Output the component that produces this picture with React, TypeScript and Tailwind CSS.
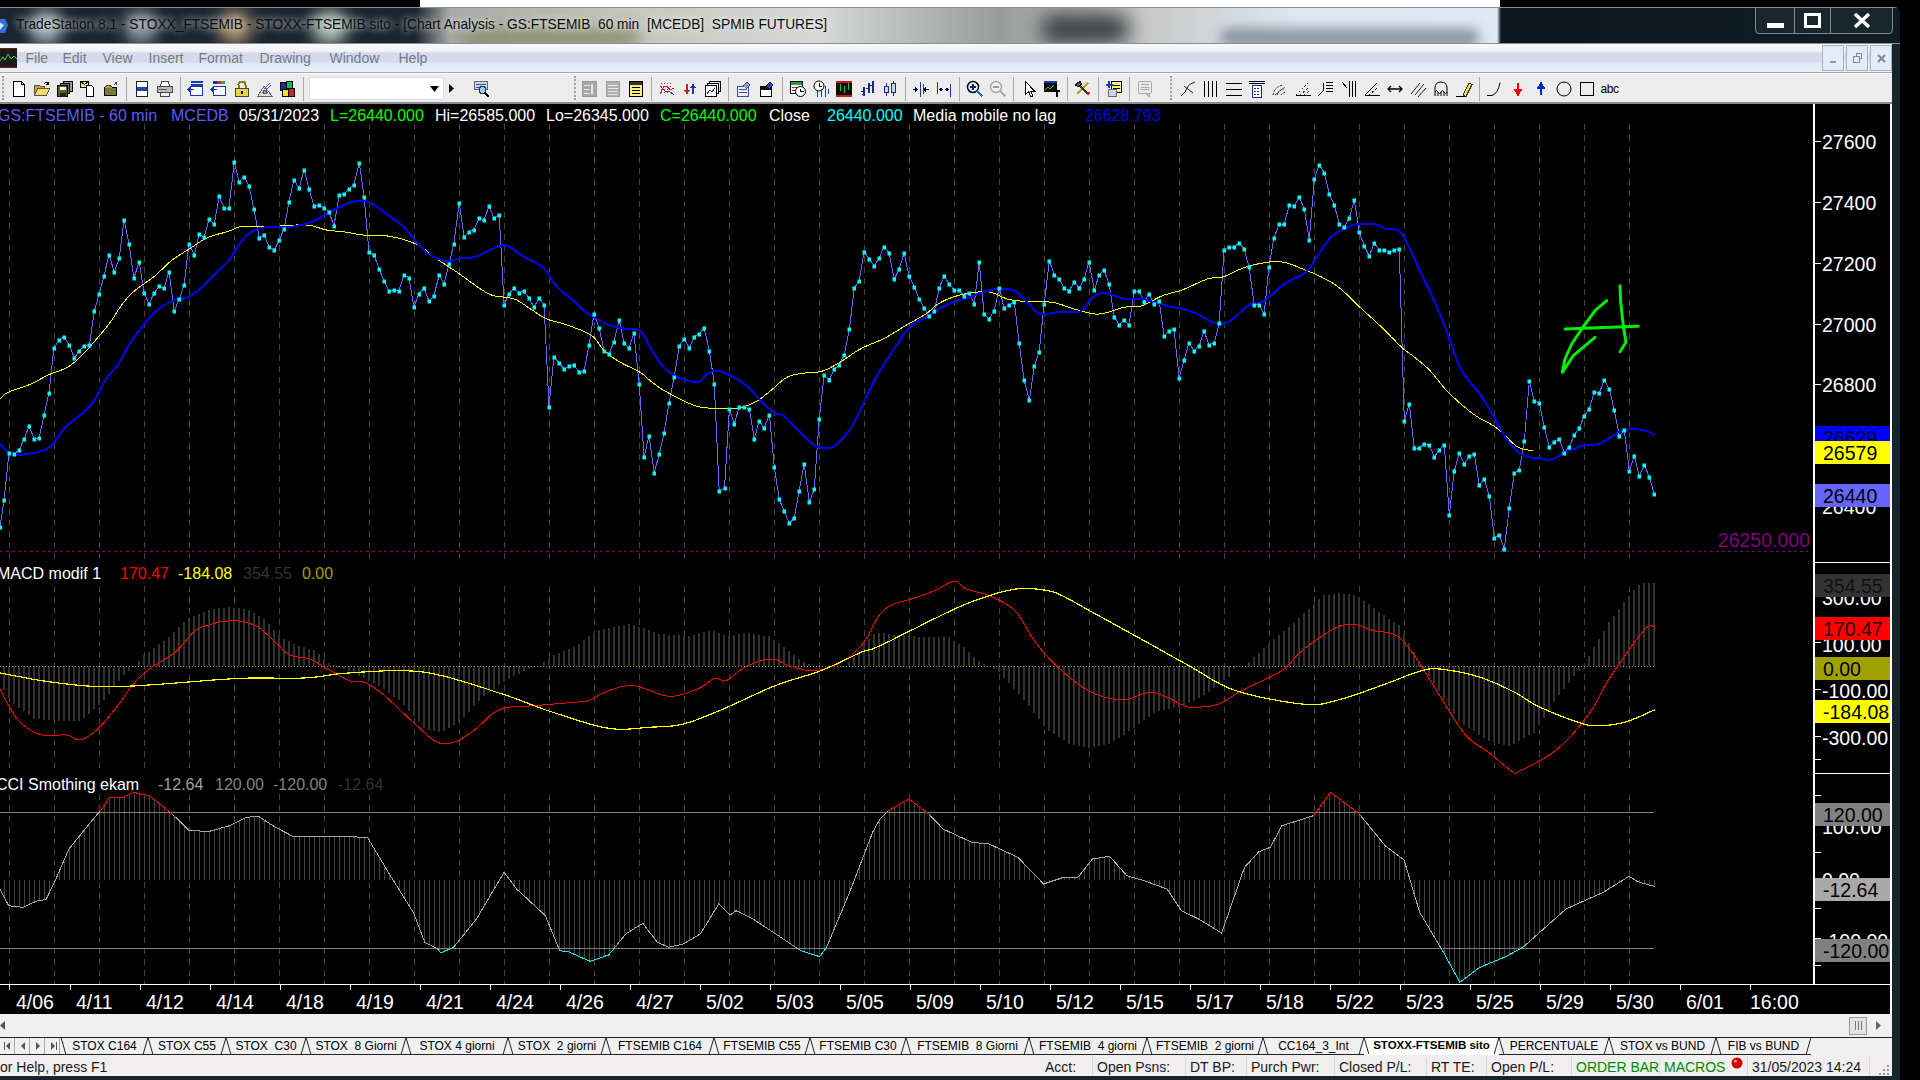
import React from 'react';

type Pt = [number, number];

// chart traces, read off crops: "x,y" pairs, converted to page pixels
const P = (s: string, ox: number, sx: number, oy: number): Pt[] =>
  s.trim().split(/\s+/).map((p) => {
    const [a, b] = p.split(',').map(Number);
    return [+(ox + a / sx).toFixed(1), +(oy + b / 3).toFixed(1)] as Pt;
  });
const L = (pts: Pt[]) => pts.map((p) => p.join(',')).join(' ');
const at = (pts: Pt[], x: number) => {
  for (let i = 1; i < pts.length; i++) {
    if (x <= pts[i][0]) {
      const [x0, y0] = pts[i - 1];
      const [x1, y1] = pts[i];
      return y0 + ((y1 - y0) * (x - x0)) / Math.max(x1 - x0, 0.01);
    }
  }
  return pts[pts.length - 1][1];
};
// catmull-rom, the moving averages are curves and not polygons
const smooth = (pts: Pt[], n = 6): Pt[] => {
  const out: Pt[] = [];
  for (let i = 0; i < pts.length - 1; i++) {
    const p0 = pts[Math.max(i - 1, 0)];
    const p1 = pts[i];
    const p2 = pts[i + 1];
    const p3 = pts[Math.min(i + 2, pts.length - 1)];
    for (let k = 0; k < n; k++) {
      const t = k / n;
      const f = (a: number, b: number, c: number, d: number) =>
        0.5 * (2 * b + (c - a) * t + (2 * a - 5 * b + 4 * c - d) * t * t + (3 * b - a - 3 * c + d) * t * t * t);
      out.push([+f(p0[0], p1[0], p2[0], p3[0]).toFixed(1), +f(p0[1], p1[1], p2[1], p3[1]).toFixed(1)]);
    }
  }
  out.push(pts[pts.length - 1]);
  return out;
};

const close: Pt[] = [
  ...P(`0,1195 10,1112 22,972 35,975 47,962 59,930 71,892 84,930 96,927 108,857 120,792 132,657 145,633 157,623 170,648 182,687 194,665 206,650 219,648 231,546 243,495 255,440 267,377 280,429 292,388 304,272 316,344 328,447 341,398 353,492 365,525 378,491 390,472 402,477 414,428 427,546 439,510 451,467 463,344 476,378 488,316 500,325 512,271 525,285 537,202 549,237 561,237 574,98 586,158 598,143 610,171 622,239 635,326 647,317 659,353 672,363 684,333 696,299 708,218 720,153 733,177 745,122 757,179 769,231 782,228 794,236 806,248 818,291 831,198 843,195 855,179 867,167 880,101 892,204 904,368 916,378 929,420 941,456 953,486 965,484 977,486 990,437 1002,446 1014,535 1026,495 1039,477 1051,516 1063,501 1076,437 1088,465 1100,405 1112,344 1125,221 1137,323 1149,309 1161,302 1174,267 1186,272 1198,231 1210,267 1223,258 1235,527 1247,495 1259,477 1272,491 1284,486 1296,507 1308,534 1321,507 1333,527 1345,833 1357,684 1370,702 1382,720 1394,712 1406,708 1419,729 1431,726 1443,648 1455,555 1468,597 1480,666 1492,675 1504,638 1517,572 1529,642 1541,657 1553,612 1566,765`, 0, 2.45, 130),
  ...P(`10,984 22,920 35,1032 47,975 59,912 71,822 84,744 96,651 108,629 121,657 133,623 145,615 157,597 170,665 182,765 194,1086 207,1077 219,840 231,885 243,834 255,834 268,840 280,930 292,875 304,897 317,857 329,1014 341,1110 353,1146 366,1182 378,1167 390,1085 402,1004 415,1120 427,1080 439,870 451,738 464,753 476,720 488,708 500,678 513,600 525,477 537,456 549,369 562,390 574,411 586,386 598,353 610,371 623,450 635,420 647,372 659,441 672,474 684,510 696,537 708,561 721,546 733,477 745,441 757,464 770,483 782,483 794,501 806,492 819,525 831,399 843,555 855,570 868,545 880,477 892,537 905,527 917,519 929,642 941,753 954,813 966,711 978,669 990,525 1003,396 1015,437 1027,450 1039,476 1051,486 1064,458 1076,477 1088,450 1100,399 1113,483 1125,437 1137,423 1149,465 1162,563 1174,588 1186,573 1198,588 1211,486 1223,486 1235,519 1247,495 1260,525 1272,516 1284,621 1296,606 1308,600 1321,747 1333,693 1345,641 1358,666 1370,651 1382,606 1394,648 1407,641 1419,582 1431,363 1443,354 1455,354 1468,342 1480,360 1492,414 1505,527 1517,527 1529,555 1541,414 1553,327 1566,285`, 640, 2.45, 130),
  ...P(`13,285 28,227 43,231 58,204 73,240 88,333 103,150 118,107 133,131 148,195 163,228 178,285 193,295 208,267 223,213 238,309 253,351 268,381 283,342 298,363 313,363 328,369 343,363 358,360 373,876 388,825 403,957 418,957 433,944 448,947 463,984 478,963 493,947 508,1158 523,1026 538,972 553,1005 568,981 583,975 598,1068 613,1050 628,1101 643,1227 658,1218 673,1260 688,1137 703,1032 718,1023 733,936 748,756 763,816 778,822 793,893 808,954 823,938 838,930 853,971 868,954 883,918 898,897 913,861 928,840 943,789 958,792 973,753 988,780 1003,843 1018,921 1033,903 1048,1026 1063,981 1078,1041 1093,1008 1108,1044 1123,1095`, 1280, 3, 130),
];
const fastMa: Pt[] = smooth([
  ...P(`0,945 20,970 45,978 90,970 110,962 130,945 160,895 205,850 230,815 260,750 290,705 320,640 350,590 375,555 400,530 430,512 460,505 495,475 530,430 560,395 590,340 615,310 650,295 700,295 740,287 770,275 800,255 830,235 860,220 890,215 920,230 950,258 990,295 1020,340 1050,375 1075,390 1100,397 1130,387 1160,385 1190,370 1225,350 1250,355 1280,380 1330,415 1350,450 1375,485 1410,520 1430,545 1480,582 1520,597 1568,606`, 0, 2.45, 130),
  ...P(`25,655 55,710 85,740 120,755 145,758 165,735 190,725 230,745 265,775 300,820 330,852 352,860 385,900 430,950 470,955 495,930 525,880 560,790 590,720 620,665 660,595 700,565 740,535 770,518 800,508 840,490 880,480 920,487 950,522 980,555 1020,550 1080,547 1105,510 1135,492 1190,510 1230,510 1290,530 1350,547 1415,585 1450,572 1490,530 1530,515 1568,475`, 640, 2.45, 130),
  ...P(`30,455 80,428 110,385 140,340 165,315 220,288 280,285 320,300 358,306 385,350 420,425 460,510 490,580 515,650 540,715 570,760 600,795 640,860 670,915 715,970 750,985 780,987 805,993 830,985 860,965 885,960 905,950 955,945 1000,920 1030,903 1090,903 1123,918`, 1280, 3, 130),
]);
const slowMa: Pt[] = smooth([
  ...P(`0,810 20,790 70,768 120,737 165,715 200,680 240,625 270,580 300,525 330,485 380,440 420,395 470,355 510,325 560,307 595,292 670,292 750,288 800,303 840,308 890,318 935,319 985,330 1030,352 1060,382 1120,430 1180,482 1210,500 1260,510 1300,540 1340,570 1390,588 1450,620 1480,665 1520,700 1568,730`, 0, 2.45, 130),
  ...P(`30,760 60,785 130,828 180,838 240,838 285,817 320,785 360,745 400,733 445,727 490,700 540,660 600,627 650,590 700,555 730,525 770,503 820,490 860,490 900,510 940,517 1010,520 1070,542 1125,555 1185,535 1230,530 1280,500 1330,482 1390,450 1430,443 1490,412 1568,398`, 640, 2.45, 130),
  ...P(`80,425 130,447 180,478 240,535 300,590 365,655 400,682 450,725 505,790 580,855 640,890 670,915 715,955 760,965`, 1280, 3, 130),
]);

const macd: Pt[] = smooth([
  ...P(`0,390 30,480 70,527 115,528 140,542 170,510 205,440 230,380 260,330 305,280 340,215 370,195 390,187 420,187 450,205 480,250 505,288 540,300 570,330 610,366 635,370 670,410 720,490 760,548 790,550 825,515 870,452 930,440 1000,430 1025,425 1060,395 1105,380 1165,412 1215,390 1245,358 1265,365 1300,322 1345,300 1375,320 1420,335 1470,305 1505,250`, 0, 1.742, 560),
  ...P(`0,165 25,135 55,120 95,95 130,66 150,90 190,110 235,155 265,235 290,290 330,355 375,405 425,422 475,400 530,440 550,445 590,435 630,395 700,335 735,275 790,210 825,196 860,215 900,230 935,300 975,410 1020,528 1060,580 1100,636 1115,636 1180,570 1235,465 1270,360 1330,215 1350,203`, 880, 1.742, 560),
]);
const signal: Pt[] = smooth([
  ...P(`0,342 80,367 160,382 220,382 300,373 420,358 530,357 600,343 700,335 770,350 880,408 960,458 1060,508 1130,505 1190,495 1260,450 1350,380 1430,335 1500,280`, 0, 1.742, 560),
  ...P(`0,260 130,150 190,110 225,94 250,88 275,91 310,104 370,160 460,245 540,322 620,395 740,436 800,422 880,375 940,337 975,330 1040,352 1100,395 1150,445 1220,492 1255,500 1300,488 1350,452`, 880, 1.742, 560),
]);
const macdHist: Pt[] = [
  ...P(`0,375 20,430 60,480 100,485 140,487 180,425 215,350 235,322 250,290 290,240 330,175 370,150 400,145 430,150 460,180 490,235 520,260 550,275 570,310 585,322 620,345 660,380 700,430 740,510 770,520 800,490 840,415 880,365 920,330 940,320 960,290 1000,265 1040,215 1100,195 1150,225 1200,230 1240,215 1270,232 1300,222 1340,232 1370,270 1400,310 1420,322 1470,322 1490,290 1520,225`, 0, 1.742, 560),
  ...P(`0,222 50,232 120,235 145,262 170,305 190,322 205,335 250,420 290,510 330,555 365,568 400,555 440,510 480,458 520,445 560,415 610,350 620,322 635,320 680,250 720,195 770,110 800,103 830,108 870,160 905,200 930,280 945,322 1010,490 1060,545 1095,563 1140,520 1180,415 1210,350 1225,322 1235,290 1270,190 1300,120 1325,72 1350,72`, 880, 1.742, 560),
];

const A = (s: string) => P(s, 0, 1.742, 560);
const B = (s: string) => P(s, 880, 1.742, 560);
const cciSegments: { c: string; pts: Pt[] }[] = [
  { c: '#a8a8a8', pts: A('0,990 15,1040 40,1045 65,1025 80,1022 95,970 120,870 165,775 175,755') },
  { c: '#ff0000', pts: A('175,755 190,716 215,715 232,700 260,710 300,765') },
  { c: '#a8a8a8', pts: A('300,765 330,815 365,817 400,800 430,775 450,772 480,805 510,832 580,832 640,835 680,950 720,1060 740,1150 762,1170') },
  { c: '#00ffff', pts: A('762,1170 768,1182 790,1165') },
  { c: '#a8a8a8', pts: A('790,1165 830,1080 878,940 900,990 950,1070 975,1175') },
  { c: '#00ffff', pts: A('975,1175 990,1178 1028,1207 1060,1188 1070,1168') },
  { c: '#a8a8a8', pts: A('1070,1168 1090,1125 1120,1093 1145,1150 1165,1165 1190,1155 1220,1125 1252,1035 1272,1068 1282,1055 1310,1078 1360,1135 1395,1175') },
  { c: '#00ffff', pts: A('1395,1175 1428,1193 1440,1165') },
  { c: '#a8a8a8', pts: [...A('1440,1165 1480,1000 1520,820'), ...B('0,780 15,755')] },
  { c: '#ff0000', pts: B('15,755 50,720 85,765') },
  { c: '#a8a8a8', pts: B('85,765 110,810 160,850 190,855 240,895 285,975 320,955 345,955 370,900 400,892 430,950 460,965 500,990 525,1055 555,1080 595,1122 635,925 660,878 680,865 700,800 755,770') },
  { c: '#ff0000', pts: B('755,770 785,700 835,765') },
  { c: '#a8a8a8', pts: B('835,765 880,860 913,903 940,1060 980,1175') },
  { c: '#00ffff', pts: B('980,1175 1010,1270 1045,1225 1090,1193 1120,1165') },
  { c: '#a8a8a8', pts: B('1120,1165 1195,1050 1260,1000 1305,952 1320,968 1350,983') },
];
const cciAll = cciSegments.flatMap((s) => s.pts);

const barXs = Array.from({ length: 331 }, (_, i) => 4 + i * 5);
const gridXs = Array.from({ length: 37 }, (_, i) => 9 + i * 45);
const dateTicks = [9, ...Array.from({ length: 25 }, (_, i) => 70 + i * 70)];

const axisLabels = [
  ['27600', 142], ['27400', 203], ['27200', 264], ['27000', 325], ['26800', 385], ['26600', 446], ['26400', 507],
  ['300.00', 598], ['100.00', 645], ['-100.00', 691], ['-300.00', 738],
  ['100.00', 827], ['0.00', 880], ['-100.00', 941],
] as [string, number][];
const axisTicks = [142, 203, 264, 325, 385, 596, 643, 690, 737, 760, 796, 853, 909, 939, 966];
const axisRules = [563, 774];
const axisTags = [
  { t: '26629', y: 427, c: 'bg-[#0000ff] text-[#00001a]' },
  { t: '26579', y: 442, c: 'bg-[#ffff00] text-black' },
  { t: '26440', y: 485, c: 'bg-[#6666ff] text-black' },
  { t: '354.55', y: 575, c: 'bg-[#333333] text-[#111111]' },
  { t: '170.47', y: 618, c: 'bg-[#ff0000] text-[#1a0000]' },
  { t: '0.00', y: 658, c: 'bg-[#a0a000] text-black' },
  { t: '-184.08', y: 701, c: 'bg-[#ffff00] text-black' },
  { t: '120.00', y: 804, c: 'bg-[#808080] text-black' },
  { t: '-12.64', y: 879, c: 'bg-[#a9a9a9] text-black' },
  { t: '-120.00', y: 940, c: 'bg-[#808080] text-black' },
];

const dates = ['4/11', '4/12', '4/14', '4/18', '4/19', '4/21', '4/24', '4/26', '4/27', '5/02', '5/03', '5/05', '5/09', '5/10', '5/12', '5/15', '5/17', '5/18', '5/22', '5/23', '5/25', '5/29', '5/30'];

const tabs = [
  ['STOX C164', 'w-[87px]'], ['STOX C55', 'w-[78px]'], ['STOX  C30', 'w-[80px]'], ['STOX  8 Giorni', 'w-[100px]'],
  ['STOX 4 giorni', 'w-[102px]'], ['STOX  2 giorni', 'w-[98px]'], ['FTSEMIB C164', 'w-[108px]'], ['FTSEMIB C55', 'w-[96px]'],
  ['FTSEMIB C30', 'w-[96px]'], ['FTSEMIB  8 Giorni', 'w-[123px]'], ['FTSEMIB  4 giorni', 'w-[118px]'], ['FTSEMIB  2 giorni', 'w-[116px]'],
  ['CC164_3_Int', 'w-[101px]'], ['STOXX-FTSEMIB sito', 'w-[135px]'], ['PERCENTUALE', 'w-[110px]'], ['STOX vs BUND', 'w-[107px]'], ['FIB vs BUND', 'w-[95px]'],
];

const Icon = ({ children }: { children: React.ReactNode }) => (
  <svg width="18" height="18" viewBox="0 0 18 18" fill="none" stroke="#000" shapeRendering="crispEdges">
    {children}
  </svg>
);

const icons: Record<string, React.ReactNode> = {
  newDoc: <><path d="M3.5 1.5h8l3 3v12h-11z" fill="#fff" /><path d="M11.5 1.5v3h3" /></>,
  open: <><path d="M1.5 15.5v-10h5l1 1h4v2" fill="#caa92a" stroke="#555" /><path d="M1.5 15.5l3-7h12l-3 7z" fill="#f2dc62" stroke="#555" /><path d="M10.5 4.5q2-3 5-1M15.5 1.500v3h-3" /></>,
  saveAll: <><rect x="7.5" y="1.500" width="9" height="10" fill="#9a9a9a" /><rect x="4.500" y="3.500" width="9" height="10" fill="#777" /><rect x="1.500" y="5.500" width="10" height="11" fill="#5e5e1e" /><rect x="3.500" y="6.500" width="6" height="3" fill="#fff" stroke="none" /><rect x="3.500" y="12.500" width="6" height="4" fill="#222" stroke="none" /></>,
  pasteDoc: <><rect x="1.500" y="1.500" width="8" height="6" fill="#f4e36e" /><path d="M1.500 1.500l4 3 4-3" /><path d="M7.500 5.500h5l2 2v9h-7z" fill="#fff" /></>,
  box: <><path d="M2.500 7.500h12v8h-12z" fill="#7a7a2a" /><path d="M2.500 7.500l2-2h4l1 2" fill="#a8a83c" stroke="#444" /><path d="M11.500 5.500l3-3M12.500 2.500h2v2" stroke="#1f3fbf" /></>,
  preview: <><rect x="3.500" y="1.500" width="11" height="15" fill="#fff" stroke="#222" /><rect x="4" y="7" width="10" height="4" fill="#2a3fb5" stroke="none" /></>,
  print: <><path d="M5.500 1.500h7l1 5h-9z" fill="#fff" stroke="#444" /><rect x="1.500" y="6.500" width="15" height="6" fill="#bbb" stroke="#444" /><path d="M4.500 12.500h9v4h-9z" fill="#eee" stroke="#444" /><path d="M3 9.500h8" stroke="#555" /></>,
  winBlue: <><path d="M3.500 1.500h12M3.500 4.500h12" stroke="#1c36b0" strokeWidth="2" /><rect x="3.500" y="6.500" width="12" height="9" fill="#fff" stroke="#1c36b0" /><path d="M1 9.500h6M3.500 7l-2.500 2.500 2.500 2.500" stroke="#1c36b0" /></>,
  winColor: <><path d="M3 2.500h4" stroke="#1c36b0" strokeWidth="3" /><path d="M7 2.500h4" stroke="#e02020" strokeWidth="3" /><path d="M11 2.500h4" stroke="#1fae3a" strokeWidth="3" /><rect x="3.500" y="6.500" width="12" height="9" fill="#fff" stroke="#1c36b0" /><path d="M1 9.500h6M3.500 7l-2.500 2.500 2.500 2.500" stroke="#1c36b0" /></>,
  lock: <><path d="M5.500 8.500v-4q0-3 3.500-3t3.500 3v4" stroke="#8a7a10" strokeWidth="2" /><rect x="2.500" y="8.500" width="13" height="8" fill="#e8d44a" stroke="#444" /><rect x="8" y="11" width="2" height="3" fill="#000" stroke="none" /></>,
  wizard: <><path d="M2 16l6-10 8 10z" fill="#ddd" stroke="#666" /><path d="M8 9l6-6M10 10l5-5M6 12h6" stroke="#3050c8" /><circle cx="9" cy="12" r="2" fill="#8aa0e0" stroke="#555" /></>,
  blocks: <><rect x="1.500" y="2.500" width="6" height="8" fill="#1c2a8a" /><rect x="7.500" y="1.500" width="6" height="7" fill="#19b84a" /><rect x="3.500" y="9.500" width="6" height="7" fill="#f2e030" /><rect x="9.500" y="8.500" width="6" height="8" fill="#d81e1e" /></>,
  find: <><rect x="1.500" y="1.500" width="13" height="8" fill="#c8d4f0" stroke="#666" /><path d="M3 4.500h10M3 7h4" stroke="#3050c8" /><circle cx="9.500" cy="10" r="3.500" fill="#9bd0e8" stroke="#333" /><path d="M12 13l4 4" strokeWidth="2" /></>,
  gray1: <><rect x="1.500" y="1.500" width="14" height="15" fill="#a8a8a8" stroke="#999" /><path d="M3 5h6M3 9h5M3 13h6" stroke="#e8e8e8" /><path d="M11 4v10" stroke="#e8e8e8" strokeWidth="2" /></>,
  gray2: <><rect x="2.500" y="1.500" width="13" height="15" fill="#b0b0b0" stroke="#a0a0a0" /><path d="M4 5h10M4 8h10M4 11h10M4 14h10" stroke="#e8e8e8" /></>,
  sheet: <><rect x="2.500" y="1.500" width="13" height="15" fill="#f7ee7c" /><rect x="3" y="2" width="12" height="3" fill="#333" stroke="none" /><path d="M5 7.500h8M5 10.500h8M5 13.500h8" /></>,
  waves: <><path d="M2 6l3 3 3 3 3-1 5 4" stroke="#2040c0" /><path d="M2 14l4-8 3 0 3 4 4-2" stroke="#d02020" /><path d="M3 3v12M6 3v12M9 3v12M12 3v12" stroke="#c03030" strokeDasharray="1 2" /></>,
  swap: <><path d="M6 4v9M3.500 10l2.500 3 2.500-3" stroke="#c82020" strokeWidth="1.500" /><path d="M12 14v-9M9.500 8l2.500-3 2.500 3" stroke="#1c36b0" strokeWidth="1.500" /></>,
  stack: <><rect x="5.500" y="1.500" width="11" height="10" fill="#ddd" /><rect x="3.500" y="3.500" width="11" height="10" fill="#eee" /><rect x="1.500" y="5.500" width="11" height="11" fill="#fff" /><path d="M3 14l3-4 2 2 3-4" stroke="#1c36b0" /></>,
  winArrow: <><rect x="2.500" y="6.500" width="11" height="10" fill="#eef" stroke="#36508c" /><path d="M4 9.500h8M4 12.500h8" stroke="#36508c" /><path d="M8 6l4-4 3 3-4 4" fill="#8aa0c8" stroke="#36508c" /></>,
  boxArrow: <><rect x="2.500" y="6.500" width="11" height="10" fill="#fff" /><rect x="3" y="7" width="10" height="3" fill="#111" stroke="none" /><path d="M8 6l4-4 3 3-4 4" fill="#2a3fb5" stroke="#111" /></>,
  calClock: <><rect x="1.500" y="1.500" width="12" height="12" fill="#fff" /><rect x="2" y="2" width="11" height="3" fill="#1fa03a" stroke="none" /><path d="M3 7h8M3 10h4" stroke="#d02020" /><circle cx="11.500" cy="11.500" r="5" fill="#fff" shapeRendering="auto" /><path d="M11.500 8.500v3h3" /></>,
  clockBars: <><circle cx="7" cy="6" r="5" fill="#fff" shapeRendering="auto" /><path d="M7 3v3h3" /><path d="M5.500 11v6M9.500 9v8M13.500 6v11M16.500 9v5" stroke="#2040a8" /></>,
  chartBlack: <><rect x="1" y="1" width="16" height="16" fill="#0a0a0a" stroke="none" /><path d="M1 1.500h16" stroke="#d01818" strokeWidth="2" /><path d="M1 16h16" stroke="#d01818" strokeWidth="2" /><path d="M5.500 4v7M9.500 6v7M13.500 3v7" stroke="#19c840" /></>,
  barsNavy: <><path d="M5.500 7v9M10.500 3v10M14.500 1v12" stroke="#1c2a8a" strokeWidth="2" /><path d="M3 11h3M8 8h3M12 5h3M4 14h2" stroke="#1c2a8a" /></>,
  candles: <><path d="M5.500 3v13M12.500 1v15" stroke="#1c2a8a" /><rect x="3.500" y="6.500" width="4" height="6" fill="#c8d4f0" stroke="#1c2a8a" /><rect x="10.500" y="3.500" width="4" height="9" fill="#c8d4f0" stroke="#1c2a8a" /></>,
  barsIn: <><path d="M1 9.500h4M3 7.500l2 2-2 2" /><path d="M8.500 2v15" stroke="#1c36b0" /><path d="M17 9.500h-5M14 7.500l-2 2 2 2" /><path d="M11 4v10" stroke="#1c36b0" /></>,
  barsOut: <><path d="M2.500 2v12" stroke="#1c36b0" /><path d="M5 9.500h3M7 8l-2 1.500 2 1.500" /><path d="M10 9.500h3M11.500 8l2 1.500-2 1.500" /><path d="M15.500 4v13" stroke="#1c36b0" /></>,
  zoomIn: <><circle cx="7" cy="7" r="5.500" fill="#eef4ff" shapeRendering="auto" strokeWidth="1.500" /><path d="M4 7h6M7 4v6" stroke="#0a1a80" strokeWidth="1.500" /><path d="M11 11l5.500 5.500" strokeWidth="2.500" stroke="#3a60c0" /></>,
  zoomOut: <><circle cx="7" cy="7" r="5.500" fill="#f0f0f0" stroke="#aaa" shapeRendering="auto" strokeWidth="1.500" /><path d="M4 7h6" stroke="#999" strokeWidth="1.500" /><path d="M11 11l5.500 5.500" strokeWidth="2.500" stroke="#aaa" /></>,
  cursor: <path d="M5.500 1.500v13l3-3 2.500 5.500 2-1-2.500-5h4z" fill="#fff" />,
  chartT: <><rect x="1" y="1" width="13" height="11" fill="#0a0a0a" stroke="none" /><rect x="1" y="1" width="13" height="2" fill="#1c36b0" stroke="none" /><path d="M2 10l3-3 2 2 4-4" stroke="#19c840" /><path d="M10 10.500h7M13.500 10.500v6" strokeWidth="2" /></>,
  tools: <><path d="M3 14L14 3" stroke="#c8a018" strokeWidth="2.500" /><path d="M3 3l12 12" stroke="#333" strokeWidth="2" /><path d="M1.500 5L6 1.500 8 4 4 7z" fill="#666" /><path d="M13 15l2.500-2.500" stroke="#c02020" strokeWidth="2" /></>,
  addTable: <><rect x="6.500" y="1.500" width="10" height="11" fill="#f7ee7c" /><path d="M8 5h7M8 8h7" /><path d="M4 1v7M0.500 4.500h7" stroke="#1c36b0" strokeWidth="2" /><rect x="3.500" y="9.500" width="8" height="7" fill="#c8d4f0" stroke="#667" /></>,
  note: <><rect x="2.500" y="1.500" width="13" height="12" rx="2" fill="#e8e8e8" stroke="#aaa" /><path d="M5 4.500h8M5 7h8M5 9.500h8" stroke="#aaa" /><path d="M10 13.500l3 3v-3" stroke="#aaa" /></>,
  trend: <path d="M2 16q5-4 6-8t8-6M5 6l9 7" stroke="#222" shapeRendering="auto" />,
  vLines: <path d="M2.500 1v16M6.500 1v16M10.500 1v16M14.500 1v16" />,
  hLines: <path d="M1 3.500h16M1 9.500h16M1 15.500h16" />,
  hCalc: <><path d="M1 1.500h16M1 3.500h16" /><rect x="4.500" y="5.500" width="9" height="12" fill="#fff" stroke="#1c2a9a" /><path d="M6 8h6M6 11h6M6 14h6" stroke="#1c2a9a" strokeDasharray="2 1" /></>,
  arcs: <path d="M2 15q1-8 10-10M6 15q1-5 7-6M10 15q1-2 5-3M4 15l10-8" stroke="#333" strokeDasharray="2 1" shapeRendering="auto" />,
  fan: <><path d="M1.500 15.500h15" /><path d="M2 15L14 3M6 15l8-7M10 15l5-4" stroke="#333" strokeDasharray="2 2" /></>,
  retrace: <><path d="M1 16l5-5v-8" /><path d="M9 2h7M9 5h7M9 8h7M9 11h7" /></>,
  channel: <path d="M2 2l5 6M9.500 1v16M12.500 1v16M15.500 1v16" />,
  angle: <><path d="M1.500 15.500h15" /><path d="M2 15L14 3" /><path d="M6 15L15 7" strokeDasharray="2 2" /></>,
  width: <path d="M2 9h14M5 6L2 9l3 3M13 6l3 3-3 3" strokeWidth="1.300" shapeRendering="auto" />,
  slashes: <path d="M2 14L11 3M6 15l9-11M9 17l8-9" stroke="#222" shapeRendering="auto" />,
  bells: <path d="M3 16V8q0-6 6-6t6 6v8M3 12q1.500-3 3 0t3 0 3 0 3 0M6 16v-4M9 16v-4M12 16v-4" shapeRendering="auto" />,
  pencil: <><path d="M1 16.500h9" /><path d="M8 15l6-12 3 1.500-6 12z" fill="#f0e040" stroke="#333" /></>,
  curve: <path d="M1 15.500h5q6-2 8-13" shapeRendering="auto" />,
  down: <path d="M9 3v6M5.500 9.500h7L9 15z" stroke="#f00000" fill="#f00000" strokeWidth="1.500" />,
  up: <path d="M9 15V9M5.500 8.500h7L9 3z" stroke="#0020e0" fill="#0020e0" strokeWidth="1.500" />,
  circle: <circle cx="9" cy="9" r="7" shapeRendering="auto" />,
  rect: <rect x="2.500" y="2.500" width="13" height="13" />,
};

const Tool = ({ name }: { name: string }) => (
  <div className="flex h-[29px] w-[23px] shrink-0 items-center justify-center">
    <Icon>{icons[name]}</Icon>
  </div>
);
const Sep = () => (
  <div className="flex h-[29px] w-[8px] shrink-0 items-center justify-center">
    <div className="h-[24px] w-px bg-[#a8a8a8]" />
  </div>
);
const Grip = ({ className }: { className: string }) => (
  <div className={`h-[24px] w-[3px] shrink-0 border-l-2 border-dotted border-[#a0a0a0] ${className}`} />
);
const Group = ({ names }: { names: string[] }) => (
  <>
    {names.map((n, i) => (
      <Tool key={i} name={n} />
    ))}
  </>
);

const statusCells = [
  ['Acct:', 'w-[52px]'],
  ['Open Psns:', 'w-[93px]'],
  ['DT BP:', 'w-[61px]'],
  ['Purch Pwr:', 'w-[88px]'],
  ['Closed P/L:', 'w-[92px]'],
  ['RT TE:', 'w-[60px]'],
  ['Open P/L:', 'w-[85px]'],
];

export default function App() {
  return (
    <div className="flex h-[1080px] w-[1920px] flex-col overflow-hidden bg-black font-['Liberation_Sans',Arial,sans-serif]">
      {/* what shows of the desktop above the window */}
      <div className="flex h-[7px] shrink-0">
        <div className="w-[420px] bg-black" />
        <div className="w-[1080px] bg-white" />
      </div>

      <div className="flex w-[1900px] flex-1 flex-col overflow-hidden rounded-tr-[6px] bg-[#18242c]">
        {/* aero title bar */}
        <div className="relative flex h-[37px] shrink-0 items-center overflow-hidden border-y border-[#8a9096] bg-[linear-gradient(90deg,#1a252f_0px,#1a252f_415px,#a8aaa6_450px,#c5c6bc_620px,#d6d8d6_820px,#9a9c9c_1000px,#c8c9c8_1150px,#dfe8f0_1300px,#dfeaf5_1497px,#0c1720_1501px,#111d25_1900px)]">
          <div className="absolute left-[30px] top-[2px] h-[34px] w-[32px] rounded-full bg-[#aebcc0] blur-[8px]" />
          <div className="absolute left-[125px] top-[2px] h-[34px] w-[32px] rounded-full bg-[#8d9aa0] blur-[8px]" />
          <div className="absolute left-[218px] top-[2px] h-[34px] w-[34px] rounded-full bg-[#b09670] blur-[8px]" />
          <div className="absolute left-[312px] top-[2px] h-[34px] w-[36px] rounded-full bg-[#b4c4b8] blur-[8px]" />
          <div className="absolute left-[460px] top-[20px] h-[20px] w-[180px] rounded-full bg-[#8e8d70] blur-[8px]" />
          <div className="absolute left-[1040px] top-[6px] h-[30px] w-[90px] rounded-full bg-[#3a3f44] blur-[10px]" />
          <div className="absolute left-[1220px] top-[20px] h-[20px] w-[260px] rounded-full bg-[#8c98a4] blur-[6px]" />
          <svg width="10" height="20" viewBox="0 0 10 20" className="relative ml-0 shrink-0">
            <path d="M-3 3h8l3 6-3 8h-8z" fill="#2f6fd8" />
            <path d="M-1 6l5 3-4 5z" fill="#cfe2ff" />
          </svg>
          <span className="relative ml-[6px] whitespace-pre text-[13.750px] text-[#0a0d10] [text-shadow:0_0_6px_rgba(255,255,255,0.7),0_0_10px_rgba(255,255,255,0.5)]">
            TradeStation 8.1 - STOXX_FTSEMIB - STOXX-FTSEMIB sito - [Chart Analysis - GS:FTSEMIB  60 min  [MCEDB]  SPMIB FUTURES]
          </span>
          {/* window buttons */}
          <div className="absolute right-[7px] top-[-1px] flex h-[27px] w-[138px] rounded-b-[4px] border border-[#7d8890] bg-[#1a262e]">
            <div className="flex w-[39px] items-end justify-center border-r border-[#7d8890] pb-[5px]">
              <div className="h-[5px] w-[17px] bg-white" />
            </div>
            <div className="flex w-[36px] items-center justify-center border-r border-[#7d8890]">
              <div className="h-[15px] w-[17px] border-[3px] border-white bg-[#1a262e]" />
            </div>
            <div className="flex flex-1 items-center justify-center">
              <svg width="18" height="15" viewBox="0 0 18 15">
                <path d="M2 1l14 13M16 1L2 14" stroke="#fff" strokeWidth="3.500" />
              </svg>
            </div>
          </div>
        </div>

        <div className="mr-[8px] flex flex-1 flex-col overflow-hidden">
          {/* menu bar */}
          <div className="flex h-[29px] shrink-0 items-center border-b border-[#a8a8a8] bg-[linear-gradient(180deg,#f8f9fc_0%,#f1f3f9_26%,#d5d9ea_32%,#d5d9ea_62%,#e2e7f4_68%,#e8edf8_100%)]">
            <div className="mr-[8.500px] h-[20px] w-[17px] shrink-0 overflow-hidden border-y border-[#7a1a1a] bg-[#1a1a1a]">
              <svg width="17" height="18" viewBox="0 0 17 18">
                <path d="M0 12l3-4 2 3 3-6 3 5 3-3 3 3" stroke="#35d04a" fill="none" />
              </svg>
            </div>
            {[['File', 'w-[37px]'], ['Edit', 'w-[40px]'], ['View', 'w-[46px]'], ['Insert', 'w-[50px]'], ['Format', 'w-[61px]'], ['Drawing', 'w-[70px]'], ['Window', 'w-[69px]'], ['Help', 'w-[40px]']].map(([t, w]) => (
              <span key={t} className={`${w} shrink-0 text-[14px] text-[#707c8c]`}>{t}</span>
            ))}
            <div className="ml-auto flex items-center gap-[2px]">
              {['min', 'restore', 'close'].map((k) => (
                <div key={k} className="flex h-[26px] w-[22px] items-center justify-center border border-[#a3b4c4] bg-[#e3ebf7]">
                  {k === 'min' && <div className="mt-[8px] h-[2px] w-[6px] bg-[#8a96a2]" />}
                  {k === 'restore' && (
                    <svg width="9" height="10" viewBox="0 0 9 10" fill="none" stroke="#7d8a96" shapeRendering="crispEdges">
                      <path d="M3.500 3.500v-3h5v5h-2M0.500 3.500h6v6h-6z" />
                    </svg>
                  )}
                  {k === 'close' && (
                    <svg width="9" height="9" viewBox="0 0 9 9" stroke="#7d8a96" strokeWidth="2">
                      <path d="M1 1l7 7M8 1L1 8" />
                    </svg>
                  )}
                </div>
              ))}
            </div>
          </div>

          {/* toolbar */}
          <div className="flex h-[31px] shrink-0 items-start border-t border-white border-b-2 border-b-[#8a8a8a] bg-[#ececec]">
            <Grip className="ml-[2px] mt-[2px] mr-[2.500px]" />
            <Group names={['newDoc', 'open', 'saveAll', 'pasteDoc', 'box']} />
            <Sep />
            <Group names={['preview', 'print']} />
            <Sep />
            <Group names={['winBlue', 'winColor', 'lock', 'wizard', 'blocks']} />
            <Sep />
            <div className="ml-[1.500px] mt-[3px] flex h-[23px] w-[135px] shrink-0 items-center justify-end rounded-[2px] border border-[#dcdcdc] bg-white pr-[4px]">
              <svg width="9" height="6" viewBox="0 0 9 6"><path d="M0 0h9L4.500 6z" fill="#000" /></svg>
            </div>
            <svg width="5" height="9" viewBox="0 0 5 9" className="ml-[5px] mt-[10px] shrink-0"><path d="M0 0l5 4.500L0 9z" fill="#000" /></svg>
            <div className="ml-[16px]"><Tool name="find" /></div>
            <Grip className="ml-[80.500px] mt-[2px] mr-[1.500px]" />
            <Group names={['gray1', 'gray2', 'sheet']} />
            <Sep />
            <Group names={['waves', 'swap', 'stack']} />
            <Sep />
            <Group names={['winArrow', 'boxArrow']} />
            <Sep />
            <Group names={['calClock', 'clockBars', 'chartBlack', 'barsNavy', 'candles']} />
            <Sep />
            <Group names={['barsIn', 'barsOut']} />
            <Sep />
            <Group names={['zoomIn', 'zoomOut']} />
            <Sep />
            <Group names={['cursor', 'chartT']} />
            <Sep />
            <Group names={['tools']} />
            <Sep />
            <Group names={['addTable']} />
            <Sep />
            <Group names={['note']} />
            <Grip className="ml-[14px] mt-[2px] mr-[3px]" />
            <Group names={['trend', 'vLines', 'hLines', 'hCalc', 'arcs', 'fan', 'retrace', 'channel', 'angle', 'width', 'slashes', 'bells', 'pencil']} />
            <Sep />
            <Group names={['curve', 'down', 'up', 'circle', 'rect']} />
            <span className="flex h-[29px] w-[23px] items-center justify-center text-[12px] tracking-[-0.500px] text-black">abc</span>
          </div>

          {/* chart */}
          <div className="flex h-[880px] shrink-0 border-r-2 border-white bg-black">
            <div className="relative w-[1813px] shrink-0 overflow-hidden">
              <svg className="absolute inset-0" width="1813" height="880" viewBox="0 105 1813 880" fill="none">
                {gridXs.map((x) => (
                  <g key={x} stroke="#444444" strokeDasharray="6 5" shapeRendering="crispEdges">
                    <line x1={x + 0.5} x2={x + 0.5} y1="125" y2="563" />
                    <line x1={x + 0.5} x2={x + 0.5} y1="587" y2="773" />
                    <line x1={x + 0.5} x2={x + 0.5} y1="795" y2="985" />
                  </g>
                ))}

                {/* price pane */}
                <line x1="0" x2="1808" y1="552.500" y2="552.500" stroke="#800080" strokeDasharray="3 3" shapeRendering="crispEdges" />
                <polyline points={L(close)} stroke="#6666ff" shapeRendering="crispEdges" />
                <polyline points={L(slowMa)} stroke="#ffff00" shapeRendering="crispEdges" />
                <polyline points={L(fastMa)} stroke="#0000ff" strokeWidth="2" shapeRendering="crispEdges" />
                {close.map(([x, y], i) => (
                  <rect key={i} x={Math.round(x) - 1.5} y={Math.round(y) - 1.5} width="3.500" height="4" fill="#00ffff" />
                ))}
                <g stroke="#00f000" strokeWidth="3" strokeLinecap="round" strokeLinejoin="round">
                  <polyline points={L(P('980,515 945,545 905,600 875,645 855,690 847,730 880,680 945,625', 1280, 3, 130))} />
                  <polyline points={L(P('855,600 1075,592', 1280, 3, 130))} />
                  <polyline points={L(P('1020,470 1022,520 1030,590 1038,640 1020,668', 1280, 3, 130))} />
                </g>

                {/* MACD pane */}
                {barXs.map((x) => (
                  <line key={x} x1={x} x2={x} y1="667" y2={at(macdHist, x)} stroke="#333333" strokeWidth="2" shapeRendering="crispEdges" />
                ))}
                <line x1="0" x2="1654" y1="667.500" y2="667.500" stroke="#a0a000" strokeDasharray="1 2" shapeRendering="crispEdges" />
                <polyline points={L(macd)} stroke="#ff0000" shapeRendering="crispEdges" />
                <polyline points={L(signal)} stroke="#ffff00" strokeWidth="1.200" shapeRendering="crispEdges" />

                {/* CCI pane */}
                {barXs.map((x) => (
                  <line key={x} x1={x + 0.5} x2={x + 0.5} y1="881" y2={at(cciAll, x)} stroke="#444444" shapeRendering="crispEdges" />
                ))}
                <line x1="0" x2="1654" y1="813.500" y2="813.500" stroke="#808080" shapeRendering="crispEdges" />
                <line x1="0" x2="1654" y1="949.500" y2="949.500" stroke="#808080" shapeRendering="crispEdges" />
                {cciSegments.map((s, i) => (
                  <polyline key={i} points={L(s.pts)} stroke={s.c} shapeRendering="crispEdges" />
                ))}
              </svg>

              {/* legends */}
              <div className="absolute left-[-2px] top-[2px] flex h-[20px] items-center whitespace-pre text-[16px] leading-none">
                <span className="w-[173px] shrink-0 text-[#5b5bf2]">GS:FTSEMIB - 60 min</span>
                <span className="w-[68px] shrink-0 text-[#5b5bf2]">MCEDB</span>
                <span className="w-[91px] shrink-0 text-white">05/31/2023</span>
                <span className="w-[105px] shrink-0 text-[#00ff00]">L=26440.000</span>
                <span className="w-[111px] shrink-0 text-white">Hi=26585.000</span>
                <span className="w-[114px] shrink-0 text-white">Lo=26345.000</span>
                <span className="w-[109px] shrink-0 text-[#00ff00]">C=26440.000</span>
                <span className="w-[58px] shrink-0 text-white">Close</span>
                <span className="w-[86px] shrink-0 text-[#00ffff]">26440.000</span>
                <span className="w-[172px] shrink-0 text-white">Media mobile no lag</span>
                <span className="shrink-0 text-[#0000e0]">26628.793</span>
              </div>
              <span className="absolute right-[3px] top-[426px] text-[19.500px] leading-[20px] text-[#800080]">26250.000</span>
              <div className="absolute left-[-3px] top-[460px] flex h-[20px] items-center whitespace-pre text-[16px] leading-none">
                <span className="w-[123px] shrink-0 text-white">MACD modif 1</span>
                <span className="w-[58px] shrink-0 text-[#ff0000]">170.47</span>
                <span className="w-[65px] shrink-0 text-[#ffff00]">-184.08</span>
                <span className="w-[59px] shrink-0 text-[#333333]">354.55</span>
                <span className="shrink-0 text-[#a0a000]">0.00</span>
              </div>
              <div className="absolute left-[-4px] top-[671px] flex h-[20px] items-center whitespace-pre text-[16px] leading-none">
                <span className="w-[162px] shrink-0 text-white">CCI Smothing ekam</span>
                <span className="w-[57px] shrink-0 text-[#a0a0a0]">-12.64</span>
                <span className="w-[58px] shrink-0 text-[#808080]">120.00</span>
                <span className="w-[65px] shrink-0 text-[#808080]">-120.00</span>
                <span className="shrink-0 text-[#333333]">-12.64</span>
              </div>
            </div>

            {/* value axis */}
            <div className="relative flex-1 overflow-hidden border-l-2 border-white">
              {axisLabels.map(([t, y], i) => (
                <span key={i} className="absolute left-[7px] h-[20px] whitespace-pre text-[19.500px] leading-[20px] text-white" style={{ top: y - 114 }}>{t}</span>
              ))}
              {axisTicks.map((y) => (
                <div key={y} className="absolute left-0 h-[1px] w-[6px] bg-white" style={{ top: y - 105 }} />
              ))}
              {axisRules.map((y) => (
                <div key={y} className="absolute left-0 right-0 h-[1px] bg-white" style={{ top: y - 105 }} />
              ))}
              {axisTags.map((g) => (
                <div key={g.t} className={`absolute inset-x-0 flex h-[23px] items-center pl-[8px] pt-[2px] text-[19.500px] ${g.c}`} style={{ top: g.y - 105 }}>{g.t}</div>
              ))}
            </div>
          </div>

          {/* date axis */}
          <div className="relative flex h-[30px] shrink-0 items-center border-x-0 border-t border-r-2 border-white bg-black pl-[16px] pt-[6px] text-[19.500px] leading-none text-white">
            {dateTicks.map((x) => (
              <div key={x} className="absolute top-0 h-[5px] w-px bg-white" style={{ left: x }} />
            ))}
            <span className="w-[60px] shrink-0">4/06</span>
            {dates.map((d) => (
              <span key={d} className="w-[70px] shrink-0">{d}</span>
            ))}
            <span className="w-[64px] shrink-0">6/01</span>
            <span className="shrink-0">16:00</span>
          </div>

          {/* scrollbar */}
          <div className="flex h-[23px] shrink-0 items-center bg-[#f0f0f0]">
            <svg width="5" height="9" viewBox="0 0 5 9" className="ml-0"><path d="M5 0L0 4.500 5 9z" fill="#555" /></svg>
            <div className="ml-auto mr-[11px] flex items-center gap-[9px]">
              <div className="flex h-[18px] w-[18px] items-center justify-center gap-[2px] border border-[#9a9a9a] bg-[#e4e4e4]">
                <div className="h-[9px] w-px bg-[#777]" />
                <div className="h-[9px] w-px bg-[#777]" />
                <div className="h-[9px] w-px bg-[#777]" />
              </div>
              <svg width="5" height="9" viewBox="0 0 5 9"><path d="M0 0l5 4.500L0 9z" fill="#666" /></svg>
            </div>
          </div>

          {/* sheet tabs */}
          <div className="flex h-[18px] shrink-0 items-stretch border-t border-[#222] bg-[#f0f0f0] text-[12px] leading-none text-black">
            <div className="flex w-[61px] shrink-0 border-b border-[#222]">
              {['M4 4h1v8H4zM6 8l4-4v8z', 'M6 8l4-4v8z', 'M6 4l4 4-4 4z', 'M6 4l4 4-4 4zM11 4h1v8h-1z'].map((d, i) => (
                <div key={i} className="flex h-full w-[15px] items-center justify-center border-r border-[#aaa]">
                  <svg width="14" height="16" viewBox="0 0 14 16"><path d={d} fill="#555" /></svg>
                </div>
              ))}
            </div>
            {tabs.map(([t, w]) => {
              const on = t === 'STOXX-FTSEMIB sito';
              return (
                <div key={t} className={`relative flex shrink-0 items-center justify-center whitespace-pre border-b ${w} ${on ? 'border-white bg-white text-[11.500px] font-bold' : 'border-[#222] bg-[#f0f0f0]'}`}>
                  <div className="absolute left-[2px] top-0 h-full w-px skew-x-[16deg] bg-[#222]" />
                  {t}
                  <div className="absolute right-[2px] top-0 h-full w-px -skew-x-[16deg] bg-[#222]" />
                </div>
              );
            })}
          </div>

          {/* status bar */}
          <div className="flex h-[21px] shrink-0 items-center whitespace-nowrap bg-[#f0eeee] pt-[2px] text-[14px] leading-none text-[#1a1a1a]">
            <span className="w-[1041px] shrink-0">or Help, press F1</span>
            {statusCells.map(([t, w]) => (
              <div key={t} className={`flex h-full shrink-0 items-center border-r border-[#d8d8d8] pl-[4px] ${w}`}>{t}</div>
            ))}
            <div className="flex h-full w-[88px] shrink-0 items-center border-r border-[#e4e2e2] pl-[4px] text-[#008a00]">ORDER BAR</div>
            <div className="flex h-full w-[66px] shrink-0 items-center pl-[4px] text-[#008a00]">MACROS</div>
            <div className="flex h-full w-[22px] shrink-0 items-start justify-center border-r border-[#d8d8d8]">
              <svg width="12" height="12" viewBox="0 0 12 12">
                <circle cx="6" cy="6" r="5.500" fill="#d00000" />
                <circle cx="4.500" cy="4" r="1.500" fill="#ff9a9a" />
              </svg>
            </div>
            <div className="flex h-full w-[122px] shrink-0 items-center border-r border-[#d8d8d8] pl-[4px]">31/05/2023 14:24</div>
            <svg width="12" height="12" viewBox="0 0 12 12" className="ml-auto mr-[2px] mt-[6px]" fill="#9a9a9a">
              <path d="M9 1h2v2H9zM5 5h2v2H5zM9 5h2v2H9zM1 9h2v2H1zM5 9h2v2H5zM9 9h2v2H9z" />
            </svg>
          </div>
        </div>
      </div>
    </div>
  );
}
